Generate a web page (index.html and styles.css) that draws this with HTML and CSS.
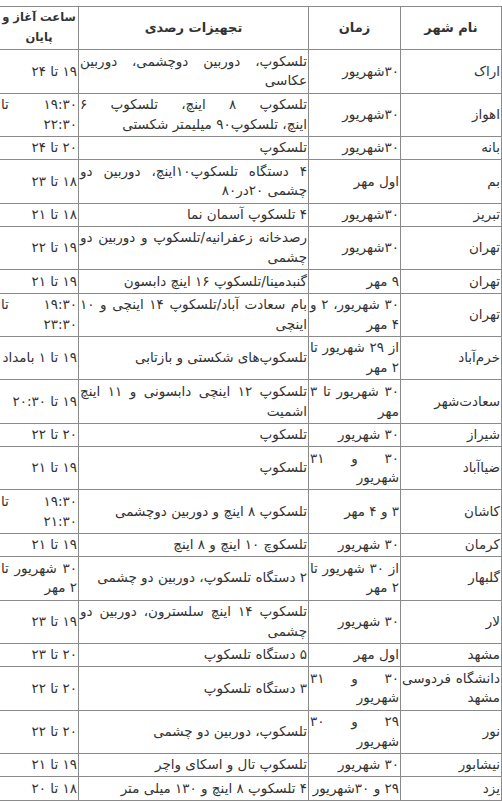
FILE: index.html
```
<!DOCTYPE html>
<html lang="fa" dir="rtl">
<head>
<meta charset="utf-8">
<link rel="stylesheet" href="styles.css">
</head>
<body>
<table class="obs">
<colgroup><col class="c-city"><col class="c-date"><col class="c-eq"><col class="c-time"></colgroup>
<thead>
<tr><th>نام شهر</th><th>زمان</th><th>تجهیزات رصدی</th><th class="th-time"><span class="nw">ساعت آغاز و</span><br>پایان</th></tr>
</thead>
<tbody>
<tr><td>اراک</td><td>۳۰شهریور</td><td>تلسکوپ، دوربین دوچشمی، دوربین عکاسی</td><td>۱۹ تا ۲۴</td></tr>
<tr><td>اهواز</td><td>۳۰شهریور</td><td><span class="jl">تلسکوپ ۸ اینچ، تلسکوپ ۶</span> اینچ، تلسکوپ۹۰ میلیمتر شکستی</td><td>۱۹:۳۰ تا ۲۲:۳۰</td></tr>
<tr><td>بانه</td><td>۳۰شهریور</td><td>تلسکوپ</td><td>۲۰ تا ۲۴</td></tr>
<tr><td>بم</td><td>اول مهر</td><td>۴ دستگاه تلسکوپ۱۰اینچ، دوربین دو چشمی ۲۰در۸۰</td><td>۱۸ تا ۲۳</td></tr>
<tr><td>تبریز</td><td>۳۰شهریور</td><td>۴ تلسکوپ آسمان نما</td><td>۱۸ تا ۲۱</td></tr>
<tr><td>تهران</td><td>۳۰شهریور</td><td>رصدخانه زعفرانیه/تلسکوپ و دوربین دو چشمی</td><td>۱۹ تا ۲۲</td></tr>
<tr><td>تهران</td><td>۹ مهر</td><td>گنبدمینا/تلسکوپ ۱۶ اینچ دابسون</td><td>۱۹ تا ۲۱</td></tr>
<tr><td>تهران</td><td>۳۰ شهریور، ۲ و ۴ مهر</td><td>بام سعادت آباد/تلسکوپ ۱۴ اینچی و ۱۰ اینچی</td><td>۱۹:۳۰ تا ۲۳:۳۰</td></tr>
<tr><td>خرم‌آباد</td><td>از ۲۹ شهریور تا ۲ مهر</td><td>تلسکوپ‌های شکستی و بازتابی</td><td>۱۹ تا ۱ بامداد</td></tr>
<tr><td>سعادت‌شهر</td><td>۳۰ شهریور تا ۳ مهر</td><td>تلسکوپ ۱۲ اینچی دابسونی و ۱۱ اینچ اشمیت</td><td>۱۹ تا ۲۰:۳۰</td></tr>
<tr><td>شیراز</td><td>۳۰ شهریور</td><td>تلسکوپ</td><td>۲۰ تا ۲۲</td></tr>
<tr><td>ضیاآباد</td><td><span class="jl">۳۰ و ۳۱</span> شهریور</td><td>تلسکوپ</td><td>۱۹ تا ۲۱</td></tr>
<tr><td>کاشان</td><td>۳ و ۴ مهر</td><td>تلسکوپ ۸ اینچ و دوربین دوچشمی</td><td>۱۹:۳۰ تا ۲۱:۳۰</td></tr>
<tr><td>کرمان</td><td>۳۰ شهریور</td><td>تلسکوچ ۱۰ اینچ و ۸ اینچ</td><td>۱۹ تا ۲۱</td></tr>
<tr><td>گلبهار</td><td>از ۳۰ شهریور تا ۲ مهر</td><td>۲ دستگاه تلسکوپ، دوربین دو چشمی</td><td>۳۰ شهریور تا ۲ مهر</td></tr>
<tr><td>لار</td><td>۳۰ شهریور</td><td>تلسکوپ ۱۴ اینچ سلسترون، دوربین دو چشمی</td><td>۱۹ تا ۲۳</td></tr>
<tr><td>مشهد</td><td>اول مهر</td><td>۵ دستگاه تلسکوپ</td><td>۲۰ تا ۲۳</td></tr>
<tr><td>دانشگاه فردوسی مشهد</td><td><span class="jl">۳۰ و ۳۱</span> شهریور</td><td>۳ دستگاه تلسکوپ</td><td>۲۰ تا ۲۲</td></tr>
<tr><td>نور</td><td><span class="jl">۲۹ و ۳۰</span> شهریور</td><td>تلسکوپ، دوربین دو چشمی</td><td>۲۰ تا ۲۲</td></tr>
<tr><td>نیشابور</td><td>۳۰ شهریور</td><td>تلسکوپ تال و اسکای واچر</td><td>۱۹ تا ۲۱</td></tr>
<tr><td>یزد</td><td>۲۹ و ۳۰شهریور</td><td>۴ تلسکوپ ۸ اینچ و ۱۳۰ میلی متر</td><td>۱۸ تا ۲۰</td></tr>
</tbody>
</table>
</body>
</html>
```
FILE: styles.css
```
html, body {
  margin: 0;
  padding: 0;
  background: #fff;
}
body {
  padding-top: 6px;
  font-family: "DejaVu Sans", sans-serif;
  font-size: 13.5px;
  color: #333;
}
.obs {
  width: 502px;
  table-layout: fixed;
  border-collapse: collapse;
  direction: rtl;
}
.c-city { width: 101px; }
.c-date { width: 92px; }
.c-eq { width: 230px; }
.c-time { width: 79px; }
.obs th, .obs td {
  border: 1px solid #8a8a8a;
  padding: 1.35px 1px;
  line-height: 19.8px;
  vertical-align: middle;
}
.obs th {
  font-size: 13px;
  font-weight: bold;
  text-align: center;
}
.obs th.th-time {
  font-size: 11.5px;
}
.nw {
  white-space: nowrap;
}
.obs td {
  text-align: justify;
}
.jl {
  display: block;
  text-align: justify;
  text-align-last: justify;
}
```
